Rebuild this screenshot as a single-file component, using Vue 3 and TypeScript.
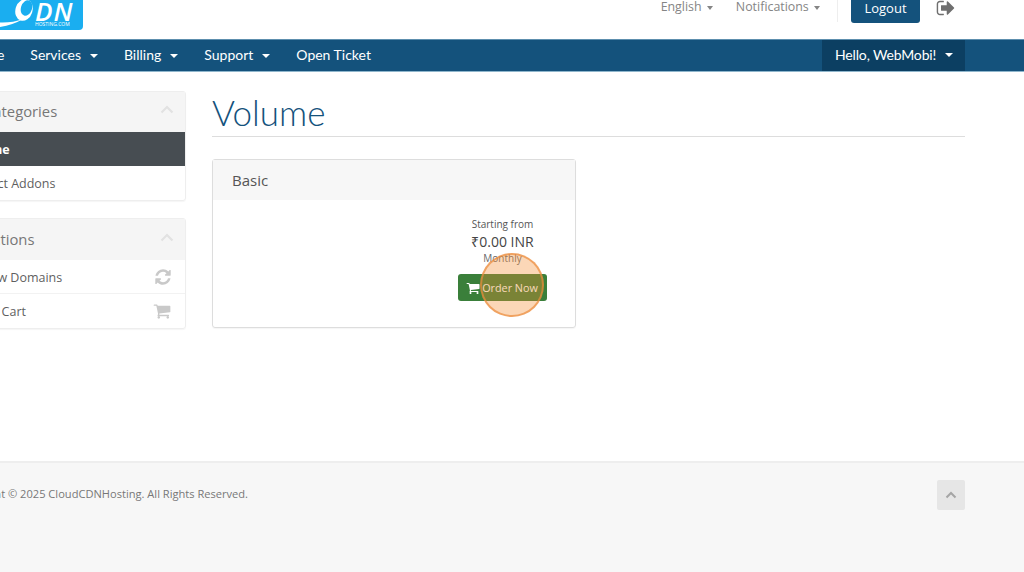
<script setup lang="ts">
interface NavItem { label: string; caret: boolean }
const navItems: NavItem[] = [
  { label: 'Home', caret: false },
  { label: 'Services', caret: true },
  { label: 'Billing', caret: true },
  { label: 'Support', caret: true },
  { label: 'Open Ticket', caret: false },
]
const cart = 'M704 1536q0 52-38 90t-90 38-90-38-38-90 38-90 90-38 90 38 38 90zm896 0q0 52-38 90t-90 38-90-38-38-90 38-90 90-38 90 38 38 90zm128-1088v512q0 24-16.500 42.500t-40.500 21.500l-1044 122q13 60 13 70 0 16-24 64h920q26 0 45 19t19 45-19 45-45 19h-1024q-26 0-45-19t-19-45q0-11 8-31.500t16-36 21.500-40 15.500-29.500l-177-823h-204q-26 0-45-19t-19-45 19-45 45-19h256q16 0 28.500 6.500t19.500 15.500 13 24.500 8 26 5.500 29.500 4.500 26h1201q26 0 45 19t19 45z'
const refresh = 'M1639 1056q0 5-1 7-64 268-268 434.500t-478 166.500q-146 0-282.500-55t-243.500-157l-129 129q-19 19-45 19t-45-19-19-45v-448q0-26 19-45t45-19h448q26 0 45 19t19 45-19 45l-137 137q71 66 161 102t187 36q134 0 250-65t186-179q11-17 53-117 8-23 30-23h192q13 0 22.500 9.500t9.500 22.500zm25-800v448q0 26-19 45t-45 19h-448q-26 0-45-19t-19-45 19-45l138-138q-148-137-349-137-134 0-250 65t-186 179q-11 17-53 117-8 23-30 23h-199q-13 0-22.500-9.500t-9.500-22.500v-7q65-268 270-434.500t480-166.500q146 0 284 55.500t245 156.500l130-129q19-19 45-19t45 19 19 45z'
const signOut = 'M704 1440q0 4 1 20t.5 26.500-3 23.500-10 19.500-20.500 6.500h-320q-119 0-203.500-84.500t-84.500-203.500v-704q0-119 84.500-203.500t203.500-84.500h320q13 0 22.500 9.500t9.500 22.500q0 4 1 20t.5 26.500-3 23.500-10 19.500-20.500 6.500h-320q-66 0-113 47t-47 113v704q0 66 47 113t113 47h312l11.500 1 11.500 3 8 5.500 7 9 2 13.500zm928-544q0 26-19 45l-544 544q-19 19-45 19t-45-19-19-45v-288h-448q-26 0-45-19t-19-45v-384q0-26 19-45t45-19h448v-288q0-26 19-45t45-19 45 19l544 544q19 19 19 45z'
</script>

<template>
  <div class="page">
    <header class="topbar">
      <svg class="logo" width="84" height="31" viewBox="0 0 84 31">
        <path d="M0 0H83V26Q83 30 79 30H0Z" fill="#1aaef0" />
        <ellipse cx="24" cy="10" rx="8.500" ry="11" transform="rotate(18 24 10)" fill="#fff" />
        <ellipse cx="26.500" cy="8" rx="5.500" ry="8" transform="rotate(18 26.500 8)" fill="#1aaef0" />
        <path d="M0 22.500Q12 23 23 19Q13 25 0 27Z" fill="#fff" />
        <text x="35" y="20.500" class="logo-main">DN</text>
        <text x="35" y="26" class="logo-sub">HOSTING.COM</text>
      </svg>
      <div class="top-links">
        <span class="top-link">English <i class="caret small"></i></span>
        <span class="top-link last">Notifications <i class="caret small"></i></span>
        <span class="divider"></span>
        <span class="logout">Logout</span>
        <svg class="signout" width="20" height="20" viewBox="0 0 1792 1792"><path :d="signOut" fill="#6f6f6f" /></svg>
      </div>
    </header>

    <nav class="navbar">
      <div class="nav-left">
        <span v-for="item in navItems" :key="item.label" class="nav-item">
          {{ item.label }}<i v-if="item.caret" class="caret"></i>
        </span>
      </div>
      <span class="hello">Hello, WebMobi!<i class="caret"></i></span>
    </nav>

    <div class="content">
      <aside class="sidebar">
        <section class="panel">
          <div class="panel-head">
            <span>Categories</span>
            <svg class="chev" width="14" height="9" viewBox="0 0 14 9"><path d="M1.500 7.500 7 2l5.500 5.500" fill="none" stroke="#e2e2e2" stroke-width="2.200" /></svg>
          </div>
          <div class="row active">Volume</div>
          <div class="row">Product Addons</div>
        </section>
        <section class="panel">
          <div class="panel-head tall">
            <span>Actions</span>
            <svg class="chev" width="14" height="9" viewBox="0 0 14 9"><path d="M1.500 7.500 7 2l5.500 5.500" fill="none" stroke="#e2e2e2" stroke-width="2.200" /></svg>
          </div>
          <div class="row line inset">
            <span>Renew Domains</span>
            <svg width="18" height="18" viewBox="0 0 1792 1792"><path :d="refresh" fill="#c9c9c9" /></svg>
          </div>
          <div class="row inset wide">
            <span>View Cart</span>
            <svg width="18" height="18" viewBox="0 0 1792 1792"><path :d="cart" fill="#c9c9c9" /></svg>
          </div>
        </section>
      </aside>

      <main class="main">
        <h1 class="title">Volume</h1>
        <article class="card">
          <div class="card-head">Basic</div>
          <div class="card-body">
            <div class="price">
              <span class="from">Starting from</span>
              <span class="amount">₹0.00 INR</span>
              <span class="cycle">Monthly</span>
              <span class="order">
                <svg width="14" height="14" viewBox="0 0 1792 1792"><path :d="cart" fill="#fff" /></svg>
                <span class="order-label">Order Now</span>
                <span class="click-dot"></span>
              </span>
            </div>
          </div>
        </article>
      </main>
    </div>

    <footer class="footer">
      <span class="copy">Copyright © 2025 CloudCDNHosting. All Rights Reserved.</span>
      <span class="back-top">
        <svg width="12" height="8" viewBox="0 0 12 8"><path d="M1.500 6.500 6 2l4.500 4.500" fill="none" stroke="#a5a5a5" stroke-width="2" /></svg>
      </span>
    </footer>
  </div>
</template>

<style scoped>
.page {
  width: 1024px;
  height: 572px;
  overflow: hidden;
  display: flex;
  flex-direction: column;
  background: #fff;
  font-family: "Open Sans", sans-serif;
  color: #58595b;
}
.topbar {
  height: 39px;
  flex: none;
  display: flex;
  justify-content: space-between;
  padding-right: 68px;
}
.logo { display: block; flex: none; }
.logo-main {
  font-family: "Open Sans", sans-serif;
  font-size: 26px;
  font-weight: 600;
  font-style: italic;
  letter-spacing: 1px;
  fill: #fff;
}
.logo-sub {
  font-family: "Open Sans", sans-serif;
  font-size: 5px;
  fill: #fff;
}
.top-links {
  display: flex;
  align-items: flex-start;
  font-size: 12.400px;
  color: #858585;
}
.top-link {
  margin-right: 23px;
  line-height: 14px;
  white-space: nowrap;
}
.top-link.last { margin-right: 17px; }
.divider {
  width: 1px;
  height: 22px;
  background: #eee;
  margin-right: 13px;
}
.logout {
  width: 69px;
  height: 23px;
  background: #14527c;
  color: #fff;
  font-size: 13px;
  line-height: 17px;
  text-align: center;
  border-radius: 0 0 3px 3px;
  margin-right: 16px;
}
.signout { margin-top: -2px; }
.caret {
  display: inline-block;
  width: 0;
  height: 0;
  margin-left: 9px;
  vertical-align: middle;
  border-top: 4px solid #fff;
  border-left: 4px solid transparent;
  border-right: 4px solid transparent;
}
.caret.small {
  border-top-color: #858585;
  border-left-width: 3.500px;
  border-right-width: 3.500px;
  margin-left: 2px;
}
.navbar {
  flex: none;
  display: flex;
  justify-content: space-between;
  padding-right: 59px;
  background: #14527c;
  border-top: 1px solid #5d8fae;
  border-bottom: 1px solid #8fb6cc;
  height: 31px;
  color: #fff;
  font-family: Lato, sans-serif;
  font-size: 14px;
}
.nav-left {
  display: flex;
  align-items: center;
  margin-left: -33px;
  gap: 26px;
  padding-bottom: 2px;
}
.nav-item { white-space: nowrap; }
.hello {
  display: flex;
  align-items: center;
  padding: 0 13px 2px;
  background: #0c3f62;
  width: 143px;
  box-sizing: border-box;
  white-space: nowrap;
  letter-spacing: -0.15px;
}
.content {
  flex: 1;
  display: flex;
  align-items: flex-start;
  padding: 19px 59px 0 0;
  min-height: 0;
}
.sidebar {
  flex: none;
  width: 240px;
  margin-left: -54px;
  display: flex;
  flex-direction: column;
  gap: 17px;
}
.panel {
  border: 1px solid #eee;
  border-radius: 3px;
  box-shadow: 0 1px 1px rgba(0,0,0,.04);
}
.panel-head {
  height: 40px;
  box-sizing: border-box;
  padding: 0 11px 2px 37px;
  background: #f5f5f5;
  display: flex;
  align-items: center;
  justify-content: space-between;
  font-size: 14.800px;
  color: #777;
}
.panel-head.tall { height: 41px; }
.chev { margin-top: -3px; }
.row {
  height: 34px;
  box-sizing: border-box;
  padding: 0 14px 0 15px;
  display: flex;
  align-items: center;
  justify-content: space-between;
  font-size: 12.500px;
  color: #5f5f5f;
}
.row.inset { padding-left: 21px; }
.row.inset.wide { padding-left: 24px; }
.row.line {
  border-bottom: 1px solid #f2f2f2;
  padding-top: 1px;
  padding-right: 13px;
}
.row.active {
  background: #474d52;
  color: #fff;
  font-weight: 700;
}
.main {
  flex: 1;
  margin-left: 26px;
  min-width: 0;
}
.title {
  margin: 0 0 22px;
  height: 45px;
  border-bottom: 1px solid #ddd;
  font-family: Lato, sans-serif;
  font-size: 35px;
  font-weight: 300;
  line-height: 43px;
  color: #14527c;
}
.card {
  width: 364px;
  height: 169px;
  box-sizing: border-box;
  border: 1px solid #ddd;
  border-radius: 3px;
  box-shadow: 0 1px 1px rgba(0,0,0,.04);
}
.card-head {
  height: 40px;
  padding-left: 19px;
  background: #f7f7f7;
  font-size: 15px;
  line-height: 41px;
  color: #555;
}
.card-body {
  display: flex;
  justify-content: flex-end;
  padding: 16px 27px 0 0;
}
.price {
  width: 91px;
  display: flex;
  flex-direction: column;
  align-items: center;
  font-size: 10px;
  line-height: 17px;
  color: #555;
}
.amount {
  font-size: 14px;
  color: #444;
}
.cycle { color: #6a6a6a; }
.order {
  position: relative;
  margin-top: 7px;
  width: 89px;
  height: 27px;
  padding-right: 1px;
  box-sizing: border-box;
  background: #3a7f3a;
  border-radius: 3px;
  color: #fff;
  font-size: 10.800px;
  display: flex;
  align-items: center;
  justify-content: center;
  gap: 2px;
}
.click-dot {
  position: absolute;
  left: 22px;
  top: -21px;
  width: 64px;
  height: 64px;
  box-sizing: border-box;
  border-radius: 50%;
  background: rgba(244, 140, 50, .35);
  border: 2px solid rgba(235, 140, 60, .7);
}
.footer {
  height: 111px;
  flex: none;
  box-sizing: border-box;
  background: #f7f7f7;
  border-top: 2px solid #eee;
  padding: 17px 59px 0 0;
  display: flex;
  justify-content: space-between;
  align-items: flex-start;
}
.copy {
  margin-left: -45px;
  font-size: 11.100px;
  line-height: 28px;
  color: #777;
  white-space: nowrap;
}
.back-top {
  width: 28px;
  height: 30px;
  background: #e6e6e6;
  border-radius: 2px;
  display: flex;
  align-items: center;
  justify-content: center;
}
</style>

<style>
html, body { margin: 0; overflow: hidden; }
</style>
